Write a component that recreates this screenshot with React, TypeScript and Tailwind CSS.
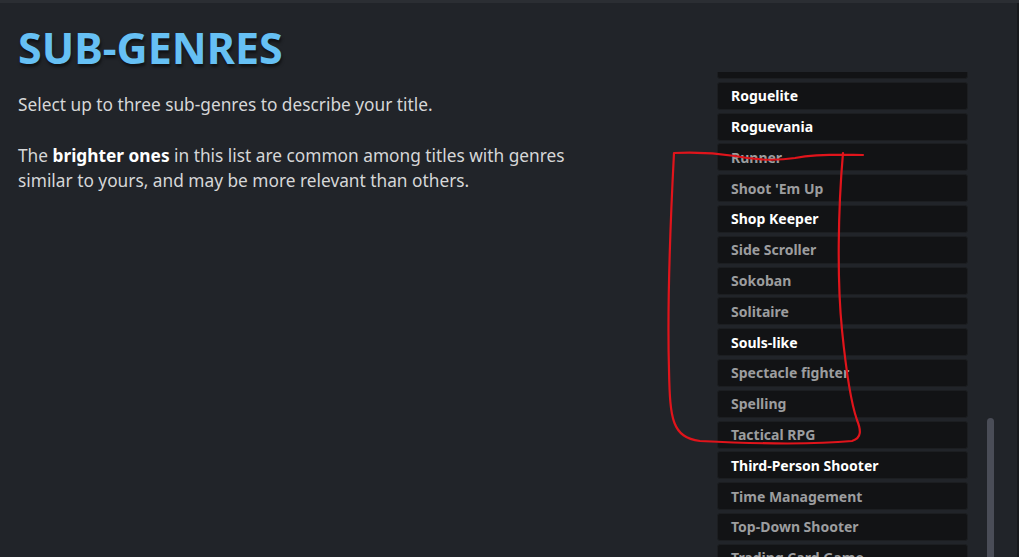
import React from "react";

const genres: { name: string; bright: boolean }[] = [
  { name: "Roguelike", bright: true },
  { name: "Roguelite", bright: true },
  { name: "Roguevania", bright: true },
  { name: "Runner", bright: false },
  { name: "Shoot 'Em Up", bright: false },
  { name: "Shop Keeper", bright: true },
  { name: "Side Scroller", bright: false },
  { name: "Sokoban", bright: false },
  { name: "Solitaire", bright: false },
  { name: "Souls-like", bright: true },
  { name: "Spectacle fighter", bright: false },
  { name: "Spelling", bright: false },
  { name: "Tactical RPG", bright: false },
  { name: "Third-Person Shooter", bright: true },
  { name: "Time Management", bright: false },
  { name: "Top-Down Shooter", bright: false },
  { name: "Trading Card Game", bright: false },
];

export default function App() {
  return (
    <div
      className="relative flex h-[557px] w-full overflow-hidden border-t-[3px] border-[#2b2e33] bg-[#212429]"
      style={{ fontFamily: '"Noto Sans", "Open Sans", sans-serif' }}
    >
      {/* intro text */}
      <div className="flex-1 pl-[18px] pt-[20px]">
        <h1 className="text-[43px] font-bold leading-[50px] text-[#66c0f4] [text-shadow:1px_3px_3px_rgba(0,0,0,0.5)]">
          SUB-GENRES
        </h1>
        <p className="mt-[19px] text-[17.3px] leading-[25px] text-[#d6d7d8]">
          Select up to three sub-genres to describe your title.
        </p>
        <p className="mt-[26px] w-[580px] text-[17.3px] leading-[25px] text-[#d6d7d8]">
          The <span className="font-bold text-white">brighter ones</span> in this list are common among titles with genres
          similar to yours, and may be more relevant than others.
        </p>
      </div>

      {/* genre list */}
      <div className="mt-[69px] w-[251px] shrink-0 overflow-hidden">
        <div className="-mt-[21px] flex flex-col gap-[2.8px]">
          {genres.map((g, i) => (
            <div
              key={g.name}
              className={`flex h-[28px] shrink-0 items-center rounded-[3px] border border-[#1c1e21] bg-[#121315] pl-[13px] text-[14px] font-bold ${
                g.bright ? "text-white" : "text-[#9c9d9f]"
              }`}
            >
              <span className={i === 0 ? "-translate-y-[3px]" : ""}>{g.name}</span>
            </div>
          ))}
        </div>
      </div>

      {/* scrollbar */}
      <div className="ml-[19px] w-[7px] shrink-0 pt-[415px]">
        <div className="h-full rounded-t-[4px] bg-[#4a4d57]" />
      </div>
      <div className="ml-[23px] w-[2px] shrink-0 bg-[#17191c]" />

      {/* hand-drawn annotation */}
      <svg
        className="pointer-events-none absolute left-0 top-[-3px]"
        width="1019"
        height="557"
        viewBox="0 0 1019 557"
        fill="none"
      >
        <path
          d="M 863 155 C 830 154 812 155 795 158 C 775 161 755 160 735 156 C 715 153 695 152 674 153 C 671 210 667 300 669 370 C 670 420 672 437 700 441 C 760 444 820 444 852 441 C 862 438 861 430 857 420 C 850 400 846 370 842 330 C 837 280 838 210 843 153"
          stroke="#e0141b"
          strokeWidth="2.2"
          strokeLinecap="round"
          strokeLinejoin="round"
        />
      </svg>
    </div>
  );
}
